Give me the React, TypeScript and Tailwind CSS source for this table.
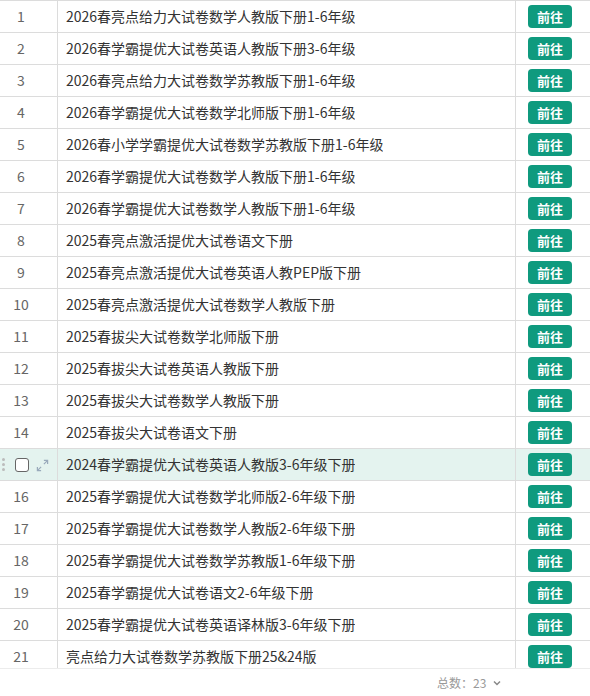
const rows = [
  "2026春亮点给力大试卷数学人教版下册1-6年级",
  "2026春学霸提优大试卷英语人教版下册3-6年级",
  "2026春亮点给力大试卷数学苏教版下册1-6年级",
  "2026春学霸提优大试卷数学北师版下册1-6年级",
  "2026春小学学霸提优大试卷数学苏教版下册1-6年级",
  "2026春学霸提优大试卷数学人教版下册1-6年级",
  "2026春学霸提优大试卷数学人教版下册1-6年级",
  "2025春亮点激活提优大试卷语文下册",
  "2025春亮点激活提优大试卷英语人教PEP版下册",
  "2025春亮点激活提优大试卷数学人教版下册",
  "2025春拔尖大试卷数学北师版下册",
  "2025春拔尖大试卷英语人教版下册",
  "2025春拔尖大试卷数学人教版下册",
  "2025春拔尖大试卷语文下册",
  "2024春学霸提优大试卷英语人教版3-6年级下册",
  "2025春学霸提优大试卷数学北师版2-6年级下册",
  "2025春学霸提优大试卷数学人教版2-6年级下册",
  "2025春学霸提优大试卷数学苏教版1-6年级下册",
  "2025春学霸提优大试卷语文2-6年级下册",
  "2025春学霸提优大试卷英语译林版3-6年级下册",
  "亮点给力大试卷数学苏教版下册25&24版",
];

const HOVERED = 14;

export default function App() {
  return (
    <div className="flex h-[696px] w-[590px] flex-col overflow-hidden bg-white font-['Microsoft_YaHei','Noto_Sans_CJK_SC',sans-serif] text-[14px] text-[#333]">
      <div className="h-[668px] overflow-hidden border-t border-[#dcdcdc]">
        {rows.map((title, index) => (
          <div
            className={
              index === HOVERED
                ? "flex h-[32px] border-b border-[#dcdcdc] bg-[#e4f3ef]"
                : "flex h-[32px] border-b border-[#dcdcdc]"
            }
            key={index}
          >
            <div className="relative flex w-[58px] shrink-0 items-center justify-center border-r border-[#dcdcdc] pr-[15px] text-[#666]">
              {index === HOVERED ? (
                <>
                  <span className="absolute left-[2px] top-[9px] flex flex-col gap-[2px]">
                    <span className="h-[3px] w-[3px] rounded-full bg-[#bbb]" />
                    <span className="h-[3px] w-[3px] rounded-full bg-[#bbb]" />
                    <span className="h-[3px] w-[3px] rounded-full bg-[#bbb]" />
                  </span>
                  <span className="absolute left-[15px] top-[9px] h-[14px] w-[14px] rounded-[3px] border border-[#666] bg-white" />
                  <svg
                    className="absolute left-[36px] top-[10px]"
                    fill="none"
                    height="13"
                    stroke="#9ab"
                    strokeWidth="1.3"
                    viewBox="0 0 14 14"
                    width="13"
                  >
                    <path d="M8.5 1.5h4v4M12.5 1.5 8.5 5.5M5.5 12.5h-4v-4M1.5 12.5l4-4" />
                  </svg>
                </>
              ) : (
                index + 1
              )}
            </div>
            <div className="flex min-w-0 flex-1 items-center border-r border-[#dcdcdc] pl-[8px]">
              <span className="truncate">{title}</span>
            </div>
            <div className="flex w-[74px] shrink-0 items-center pl-[12px]">
              <button className="h-[23px] w-[44px] rounded-[4px] bg-[#0f9a7e] text-[13px] font-bold text-white">
                前往
              </button>
            </div>
          </div>
        ))}
      </div>
      <div className="flex flex-1 items-center border-t border-[#ececec] pl-[437px] text-[12px] text-[#999]">
        <span>总数：23</span>
        <svg
          className="ml-[6px]"
          fill="none"
          height="10"
          stroke="#888"
          strokeWidth="1.5"
          viewBox="0 0 10 10"
          width="10"
        >
          <path d="M2 3.5 5 6.5 8 3.5" />
        </svg>
      </div>
    </div>
  );
}
